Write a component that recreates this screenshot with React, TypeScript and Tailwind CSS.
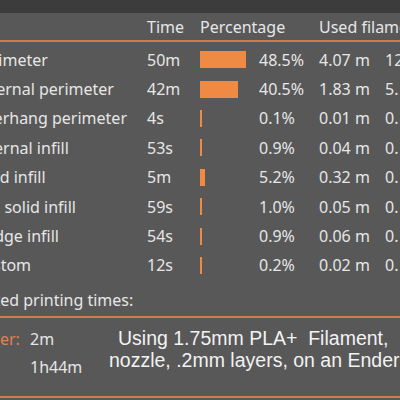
const rows = [
  { name: 'Perimeter', time: '50m', pct: 48.5, used: '4.07 m', more: '12' },
  { name: 'External perimeter', time: '42m', pct: 40.5, used: '1.83 m', more: '5.' },
  { name: 'Overhang perimeter', time: '4s', pct: 0.1, used: '0.01 m', more: '0.' },
  { name: 'Internal infill', time: '53s', pct: 0.9, used: '0.04 m', more: '0.' },
  { name: 'Solid infill', time: '5m', pct: 5.2, used: '0.32 m', more: '0.' },
  { name: 'Top solid infill', time: '59s', pct: 1.0, used: '0.05 m', more: '0.' },
  { name: 'Bridge infill', time: '54s', pct: 0.9, used: '0.06 m', more: '0.' },
  { name: 'Custom', time: '12s', pct: 0.2, used: '0.02 m', more: '0.' },
]

export default function App() {
  return (
    <div className="w-[400px] h-[400px] overflow-hidden bg-[#585858] text-[16px] text-[#e6e6e6] font-['Noto_Sans',sans-serif]">
      <div className="h-[13px] bg-[#3c3c3c]" />

      <div className="grid grid-cols-[174px_53px_119px_66px_60px] ml-[-27px] h-[27px] items-center leading-none whitespace-nowrap">
        <span />
        <span>Time</span>
        <span>Percentage</span>
        <span>Used filament</span>
        <span />
      </div>
      <div className="h-[2px] bg-[#d27b47]" />

      <div className="pt-[3px]">
        {rows.map((r) => (
          <div
            key={r.name}
            className="grid grid-cols-[174px_53px_119px_66px_60px] ml-[-27px] h-[29.4px] items-center leading-none whitespace-nowrap"
          >
            <span>{r.name}</span>
            <span>{r.time}</span>
            <div className="flex items-center">
              <div className="w-[59px] flex items-center">
                <div
                  className="h-[17px] bg-[#ee8a44]"
                  style={{ width: Math.max(2, Math.round(r.pct * 0.95)) }}
                />
              </div>
              <span>{r.pct.toFixed(1)}%</span>
            </div>
            <span>{r.used}</span>
            <span>{r.more}</span>
          </div>
        ))}
      </div>

      <div className="h-[36px] flex items-center ml-[-56px] whitespace-nowrap leading-none pt-[4px]">
        Estimated printing times:
      </div>
      <div className="h-[2px] bg-[#d27b47]" />

      <div className="h-[78px] flex whitespace-nowrap">
        <div className="grid grid-cols-[78px_52px] gap-x-[10px] ml-[-58px] auto-rows-[28px] items-center pt-[7px] leading-none">
          <span className="text-[#e0824a]">First layer:</span>
          <span>2m</span>
          <span className="text-[#e0824a]">Total:</span>
          <span>1h44m</span>
        </div>
        <div className="flex flex-col pt-[9px] text-[19.5px] leading-[22px] text-[#f2f2f2] font-['Liberation_Sans',sans-serif]">
          <span className="ml-[36px]">Using 1.75mm PLA+&nbsp; Filament,</span>
          <span className="ml-[27px]">nozzle, .2mm layers, on an Ender 3</span>
        </div>
      </div>
      <div className="h-[2px] bg-[#d27b47]" />
    </div>
  )
}
